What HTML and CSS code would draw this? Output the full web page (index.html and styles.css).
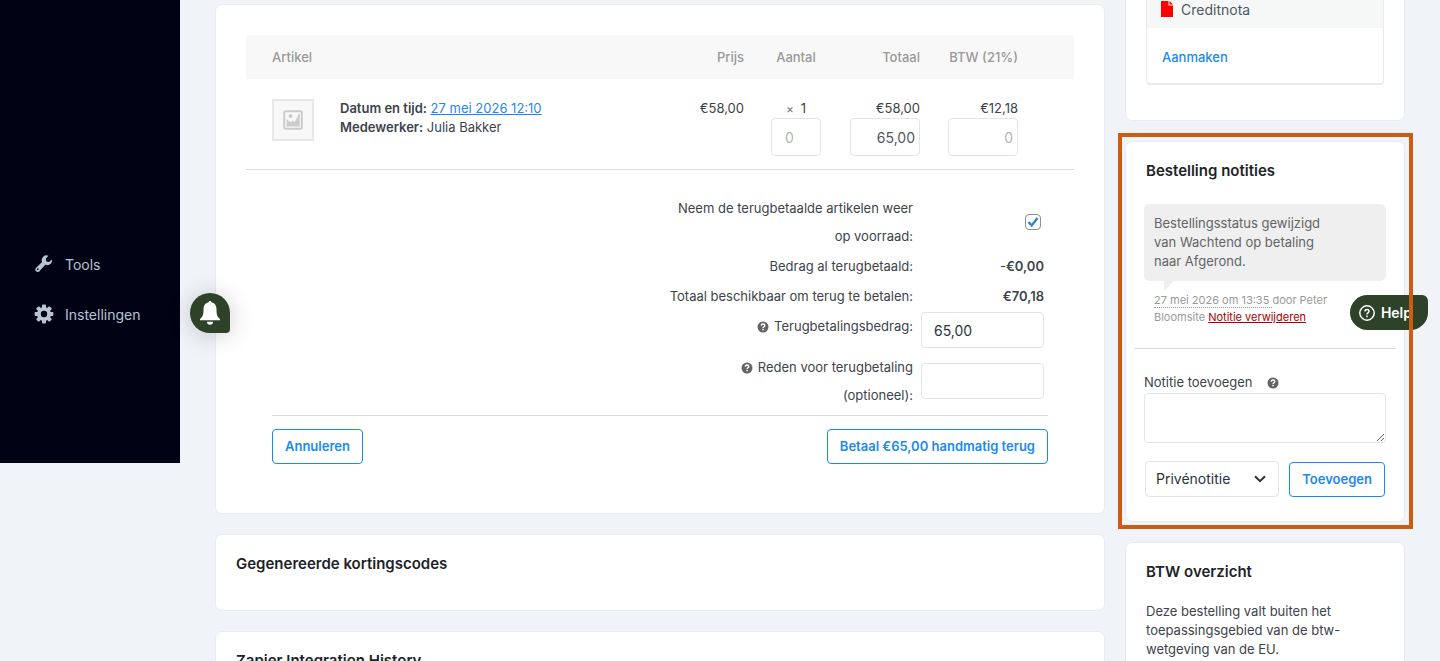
FILE: index.html
```html
<!DOCTYPE html>
<html lang="nl">
<head>
  <meta charset="UTF-8" />
  <meta name="viewport" content="width=device-width, initial-scale=1" />
  <title>Bestelling bewerken</title>
  <link rel="stylesheet" href="styles.css">
</head>
<body>

  <svg class="sprite" aria-hidden="true">
    <symbol id="icon-help" viewBox="0 0 12 12">
      <circle cx="6" cy="6" r="5.5" fill="#646464"/>
      <path d="M4.3 4.7C4.3 3.6 5 3 6 3s1.8.6 1.8 1.5c0 1.2-1.7 1.2-1.7 2.4" fill="none" stroke="#fff" stroke-width="1.4"/>
      <rect x="5.3" y="7.8" width="1.5" height="1.5" fill="#fff"/>
    </symbol>
  </svg>

  <nav class="sidebar">
    <a href="#" class="menu-item">
      <svg class="menu-icon" viewBox="0 0 20 20"><path fill="currentColor" fill-rule="evenodd" d="M16.7 9.8a4.9 4.9 0 0 1-5.4 1L5.4 17.2a2.3 2.3 0 0 1-3.5-3.3l6.2-6a4.8 4.8 0 0 1 6.3-6.2l-2.6 3.1.6 2.8 2.7.5 2.9-2.7a4.8 4.8 0 0 1-1.3 4.4zM3 15.700a.9.9 0 1 0 1.600-.9.9.9 0 0 0-1.600.9z"/></svg>
      Tools
    </a>
    <a href="#" class="menu-item">
      <svg class="menu-icon" viewBox="0 0 20 20">
        <g fill="currentColor">
          <rect x="8" y="0.6" width="4" height="18.8" rx="1"/>
          <rect x="8" y="0.6" width="4" height="18.8" rx="1" transform="rotate(45 10 10)"/>
          <rect x="8" y="0.6" width="4" height="18.8" rx="1" transform="rotate(90 10 10)"/>
          <rect x="8" y="0.6" width="4" height="18.8" rx="1" transform="rotate(135 10 10)"/>
          <circle cx="10" cy="10" r="7"/>
        </g>
        <circle cx="10" cy="10" r="3.2" fill="#010314"/>
      </svg>
      Instellingen
    </a>
  </nav>

  <main class="content">
    <div class="column-main">
      <section class="card card-order">
        <table class="items">
          <thead>
            <tr>
              <th colspan="2" class="col-item">Artikel</th>
              <th class="col-price">Prijs</th>
              <th class="col-qty">Aantal</th>
              <th class="col-price">Totaal</th>
              <th class="col-price">BTW (21%)</th>
              <th class="col-end"></th>
            </tr>
          </thead>
          <tbody>
            <tr>
              <td class="col-thumb">
                <div class="thumb">
                  <svg width="20" height="20" viewBox="0 0 20 20">
                    <rect x="1.2" y="1.2" width="17.6" height="17.6" rx="1.5" fill="#f8f8f8" stroke="#ccc" stroke-width="2"/>
                    <path fill="#ccc" d="M3.500 9l2.500 2 2 1.500 1.500-2 2 1.500L14 8l1.500-4h1.200v12.500H3.500z"/>
                    <circle cx="7.500" cy="6" r="2" fill="#ccc"/>
                  </svg>
                </div>
              </td>
              <td>
                <strong>Datum en tijd:</strong> <a href="#">27 mei 2026 12:10</a><br>
                <strong>Medewerker:</strong> Julia Bakker
              </td>
              <td class="col-price">€58,00</td>
              <td class="col-qty">
                <small class="times">×</small> 1
                <input type="text" class="field qty" placeholder="0" aria-label="Aantal">
              </td>
              <td class="col-price">€58,00
                <input type="text" class="field amount" value="65,00" aria-label="Totaal">
              </td>
              <td class="col-price">€12,18
                <input type="text" class="field amount" placeholder="0" aria-label="BTW">
              </td>
              <td class="col-end"></td>
            </tr>
          </tbody>
        </table>

        <div class="refund">
          <div class="refund-row middle">
            <label for="restock">Neem de terugbetaalde artikelen weer op voorraad:</label>
            <div class="value"><input type="checkbox" id="restock" class="checkbox" checked></div>
          </div>
          <div class="refund-row">
            <span class="label">Bedrag al terugbetaald:</span>
            <div class="value">-<strong>€0,00</strong></div>
          </div>
          <div class="refund-row">
            <span class="label">Totaal beschikbaar om terug te betalen:</span>
            <div class="value"><strong>€70,18</strong></div>
          </div>
          <div class="refund-row amount-row">
            <label for="refund-amount"><svg class="tip"><use href="#icon-help"/></svg>Terugbetalingsbedrag:</label>
            <input type="text" id="refund-amount" class="field" value="65,00">
          </div>
          <div class="refund-row middle">
            <label for="refund-reason"><svg class="tip"><use href="#icon-help"/></svg>Reden voor terugbetaling<br>(optioneel):</label>
            <input type="text" id="refund-reason" class="field">
          </div>
        </div>

        <div class="refund-actions">
          <button type="button" class="button">Annuleren</button>
          <button type="button" class="button">Betaal €65,00 handmatig terug</button>
        </div>
      </section>

      <section class="card card-small">
        <h2>Gegenereerde kortingscodes</h2>
      </section>

      <section class="card card-small">
        <h2>Zapier Integration History</h2>
      </section>
    </div>

    <div class="column-side">
      <section class="card card-documents">
        <div class="document">
          <div class="document-head">
            <svg width="12" height="16" viewBox="0 0 12 16"><path fill="#f00" d="M0 0h7.500v4.500H12V16H0z"/><path fill="#f00" d="M8.500 0L12 3.500H8.500z"/></svg>
            Creditnota
          </div>
          <div class="document-body"><a href="#">Aanmaken</a></div>
        </div>
      </section>

      <section class="card card-notes">
        <h2>Bestelling notities</h2>
        <div class="note">
          <p class="note-text">Bestellingsstatus gewijzigd van Wachtend op betaling naar Afgerond.</p>
          <p class="note-meta"><abbr>27 mei 2026 om 13:35 </abbr>door Peter Bloomsite <a href="#">Notitie verwijderen</a></p>
        </div>
        <form class="add-note">
          <label for="note">Notitie toevoegen <svg class="tip"><use href="#icon-help"/></svg></label>
          <textarea id="note" class="field"></textarea>
          <div class="add-note-row">
            <div class="select-wrap">
              <select class="field" aria-label="Soort notitie">
                <option>Privénotitie</option>
                <option>Notitie aan klant</option>
              </select>
              <svg class="chevron" width="12" height="8" viewBox="0 0 12 8"><path d="M1 1.200l5 5 5-5" fill="none" stroke="#2c3338" stroke-width="2"/></svg>
            </div>
            <button type="button" class="button">Toevoegen</button>
          </div>
        </form>
      </section>

      <section class="card card-vat">
        <h2>BTW overzicht</h2>
        <p>Deze bestelling valt buiten het toepassingsgebied van de btw-wetgeving van de EU.</p>
      </section>
    </div>
  </main>

  <button type="button" class="bell" aria-label="Meldingen">
    <svg width="20" height="24" viewBox="0 0 20 24"><path fill="#fff" d="M10 0c.8 0 1.300.5 1.300 1.300C14.600 2 16.500 4.600 16.500 8c0 5.500.5 7.500 3.500 10v1.200H0V18c3-2.500 3.500-4.500 3.500-10 0-3.400 1.900-6 5.200-6.700C8.700.5 9.200 0 10 0zM7 20.700h6a3 3 0 0 1-6 0z"/></svg>
  </button>

  <button type="button" class="help">
    <svg width="16" height="16" viewBox="0 0 16 16" fill="none" stroke="#fff" stroke-width="1.5"><circle cx="8" cy="8" r="7.200"/><path d="M6 6.400C6 5.200 6.900 4.500 8 4.500s2 .7 2 1.800C10 7.800 8 7.900 8 9.400"/><path d="M8 10.600v1.600"/></svg>
    Help
  </button>

</body>
</html>
```

FILE: styles.css
```css
* {
  box-sizing: border-box;
}

body {
  margin: 0;
  height: 100vh;
  overflow: hidden;
  display: flex;
  align-items: flex-start;
  background-color: #f0f3f8;
  color: #3c434a;
  font-family: Inter, "Liberation Sans", sans-serif;
  font-size: 13px;
  line-height: 19px;
}

h2 {
  margin: 0;
  color: #1d2327;
  font-size: 15px;
  font-weight: 600;
  line-height: 20px;
}

p {
  margin: 0;
}

a {
  color: #1b8af0;
}

strong {
  font-weight: 600;
}

.sprite {
  position: absolute;
  width: 0;
  height: 0;
}

/* Sidebar */
.sidebar {
  flex: 0 0 180px;
  padding: 239px 0 124px;
  background-color: #010314;
}

.menu-item {
  display: flex;
  align-items: center;
  gap: 11px;
  height: 50px;
  padding-left: 34px;
  color: #b9c4d0;
  font-size: 14px;
  text-decoration: none;
}

.menu-icon {
  width: 20px;
  height: 20px;
}

/* Columns */
.content {
  flex: 1;
  min-width: 0;
  display: flex;
  align-items: flex-start;
  gap: 20px;
  padding: 0 35px;
}

.column-main,
.column-side {
  display: flex;
  flex-direction: column;
  gap: 20px;
}

.column-main {
  flex: 1;
  min-width: 0;
  margin-top: 4px;
}

/* the top of this column is scrolled out of view */
.column-side {
  flex: 0 0 280px;
  margin-top: -31px;
}

.card {
  border: 1px solid #e8ebef;
  border-radius: 7px;
  background-color: #fff;
}

.card-order {
  padding: 30px 30px 49px;
}

.card-small {
  padding: 19px 20px 36px;
}

/* Order items */
.items {
  width: 100%;
  border-collapse: collapse;
  border-bottom: 1px solid #dcdcde;
}

.items th {
  height: 44px;
  padding: 0 13px;
  background-color: #f8f8f8;
  color: #999;
  font-weight: 500;
  text-align: left;
}

.items td {
  padding: 20px 13px 13px;
  vertical-align: top;
}

.items .col-item,
.items .col-thumb {
  padding-left: 26px;
}

.items .col-thumb {
  width: 81px;
}

.items .col-price {
  width: 98px;
  text-align: right;
}

.items .col-qty {
  width: 78px;
  text-align: center;
}

.items .col-end {
  width: 43px;
  padding: 0;
}

.thumb {
  display: flex;
  align-items: center;
  justify-content: center;
  width: 42px;
  height: 42px;
  border: 2px solid #e8e8e8;
  background-color: #f8f8f8;
}

.times {
  margin-right: 3px;
  color: #777;
  font-size: 12px;
}

/* Form controls */
.field {
  border: 1px solid #e2e4e7;
  border-radius: 4px;
  background-color: #fff;
  color: #2c3338;
  font-family: inherit;
  font-size: 14px;
}

.field::placeholder {
  color: #b4b4b4;
}

.items .field {
  display: block;
  height: 38px;
  color: #50575e;
}

.qty {
  width: 50px;
  margin: 0 auto;
  padding: 0 13px;
}

.amount {
  width: 70px;
  margin-left: auto;
  padding: 0 4px;
  text-align: right;
}

.checkbox {
  appearance: none;
  width: 16px;
  height: 16px;
  margin: 0 3px 0 0;
  border: 1px solid #8c8f94;
  border-radius: 4px;
  background: #fff url("data:image/svg+xml,%3Csvg xmlns='http://www.w3.org/2000/svg' viewBox='0 0 14 14'%3E%3Cpath d='M2.500 7l3.200 3.500L11.500 3' fill='none' stroke='%233582c4' stroke-width='2.400'/%3E%3C/svg%3E");
}

.button {
  height: 35px;
  padding: 0 12px 2px;
  border: 1px solid #1b8af0;
  border-radius: 4px;
  background-color: #fff;
  color: #1b8af0;
  font-family: inherit;
  font-size: 13px;
  font-weight: 600;
}

.tip {
  width: 12px;
  height: 12px;
  margin-right: 5px;
  vertical-align: -2px;
}

/* Refund totals */
.refund {
  display: flex;
  flex-direction: column;
  align-items: flex-end;
  gap: 2px;
  margin: 0 26px;
  padding: 24px 0 6px;
  border-bottom: 1px solid #dcdcde;
  line-height: 28px;
}

.refund-row {
  display: grid;
  grid-template-columns: 250px 123px;
  gap: 8px;
  padding-right: 4px;
  text-align: right;
}

.middle {
  align-items: center;
}

.amount-row {
  padding-bottom: 3px;
}

.refund .value {
  display: flex;
  justify-content: flex-end;
  align-items: center;
}

.refund .field {
  width: 100%;
  height: 36px;
  padding: 0 12px;
}

.refund-actions {
  display: flex;
  justify-content: space-between;
  margin: 13px 26px 0;
}

/* Documents */
.card-documents {
  padding: 20px 20px 35px;
}

.document {
  border: 1px solid #e8ebef;
  border-bottom-width: 2px;
  border-radius: 4px;
}

.document-head {
  display: flex;
  align-items: center;
  gap: 8px;
  height: 37px;
  padding: 0 14px 1px;
  background-color: #f6f7f7;
  color: #50575e;
  font-size: 14px;
}

.document-body {
  padding: 20px 15px 16px;
}

.document-body a {
  font-weight: 500;
  text-decoration: none;
}

/* Order notes */
.card-notes {
  position: relative;
  padding: 19px 18px 24px;
}

.card-notes::after {
  content: "";
  position: absolute;
  inset: -9px -9px -8px -8px;
  z-index: 20;
  border: 4px solid #cd5c10;
  pointer-events: none;
}

.card-notes h2 {
  padding-left: 2px;
}

.note {
  margin-top: 23px;
}

.note-text {
  position: relative;
  padding: 10px 60px 10px 10px;
  border-radius: 6px;
  background-color: #efefef;
  color: #646464;
}

.note-text::after {
  content: "";
  position: absolute;
  top: 100%;
  left: 20px;
  border-style: solid;
  border-width: 10px 10px 0 0;
  border-color: #efefef transparent;
}

.note-meta {
  padding: 11px 10px 0;
  color: #999;
  font-size: 11px;
  line-height: 17px;
}

.note-meta abbr {
  border-bottom: 1px dotted #999;
}

.note-meta a {
  color: #a00;
}

.add-note {
  margin: 22px -10px 0;
  padding: 24px 10px 0;
  border-top: 1px solid #dcdcde;
}

.add-note label {
  display: block;
}

.add-note .tip {
  margin: 0 0 0 11px;
}

.add-note textarea {
  display: block;
  width: 100%;
  height: 50px;
  margin-top: 1px;
}

.add-note-row {
  display: flex;
  align-items: flex-end;
  gap: 10px;
  margin-top: 18px;
  padding: 0 1px;
}

.select-wrap {
  position: relative;
  flex: 1;
}

.select-wrap select {
  display: block;
  width: 100%;
  height: 36px;
  padding: 0 10px 1px;
  appearance: none;
}

.chevron {
  position: absolute;
  right: 13px;
  top: 14px;
  pointer-events: none;
}

/* VAT */
.card-vat {
  padding: 19px 20px;
}

.card-vat p {
  margin-top: 20px;
  padding-right: 30px;
}

/* Floating buttons */
.bell,
.help {
  position: fixed;
  z-index: 10;
  display: flex;
  align-items: center;
  border: 0;
  background-color: #2d4228;
  color: #fff;
  font-family: inherit;
}

.bell {
  left: 190px;
  top: 293px;
  justify-content: center;
  width: 40px;
  height: 40px;
  padding: 0;
  border-radius: 20px 20px 4px 20px;
  box-shadow: 0 2px 24px rgba(0, 0, 0, 0.2);
}

.help {
  right: 12px;
  top: 295px;
  gap: 6px;
  height: 35px;
  padding: 0 16px 0 9px;
  border-radius: 18px 6px 18px 18px;
  font-size: 14px;
  font-weight: 600;
}
```
